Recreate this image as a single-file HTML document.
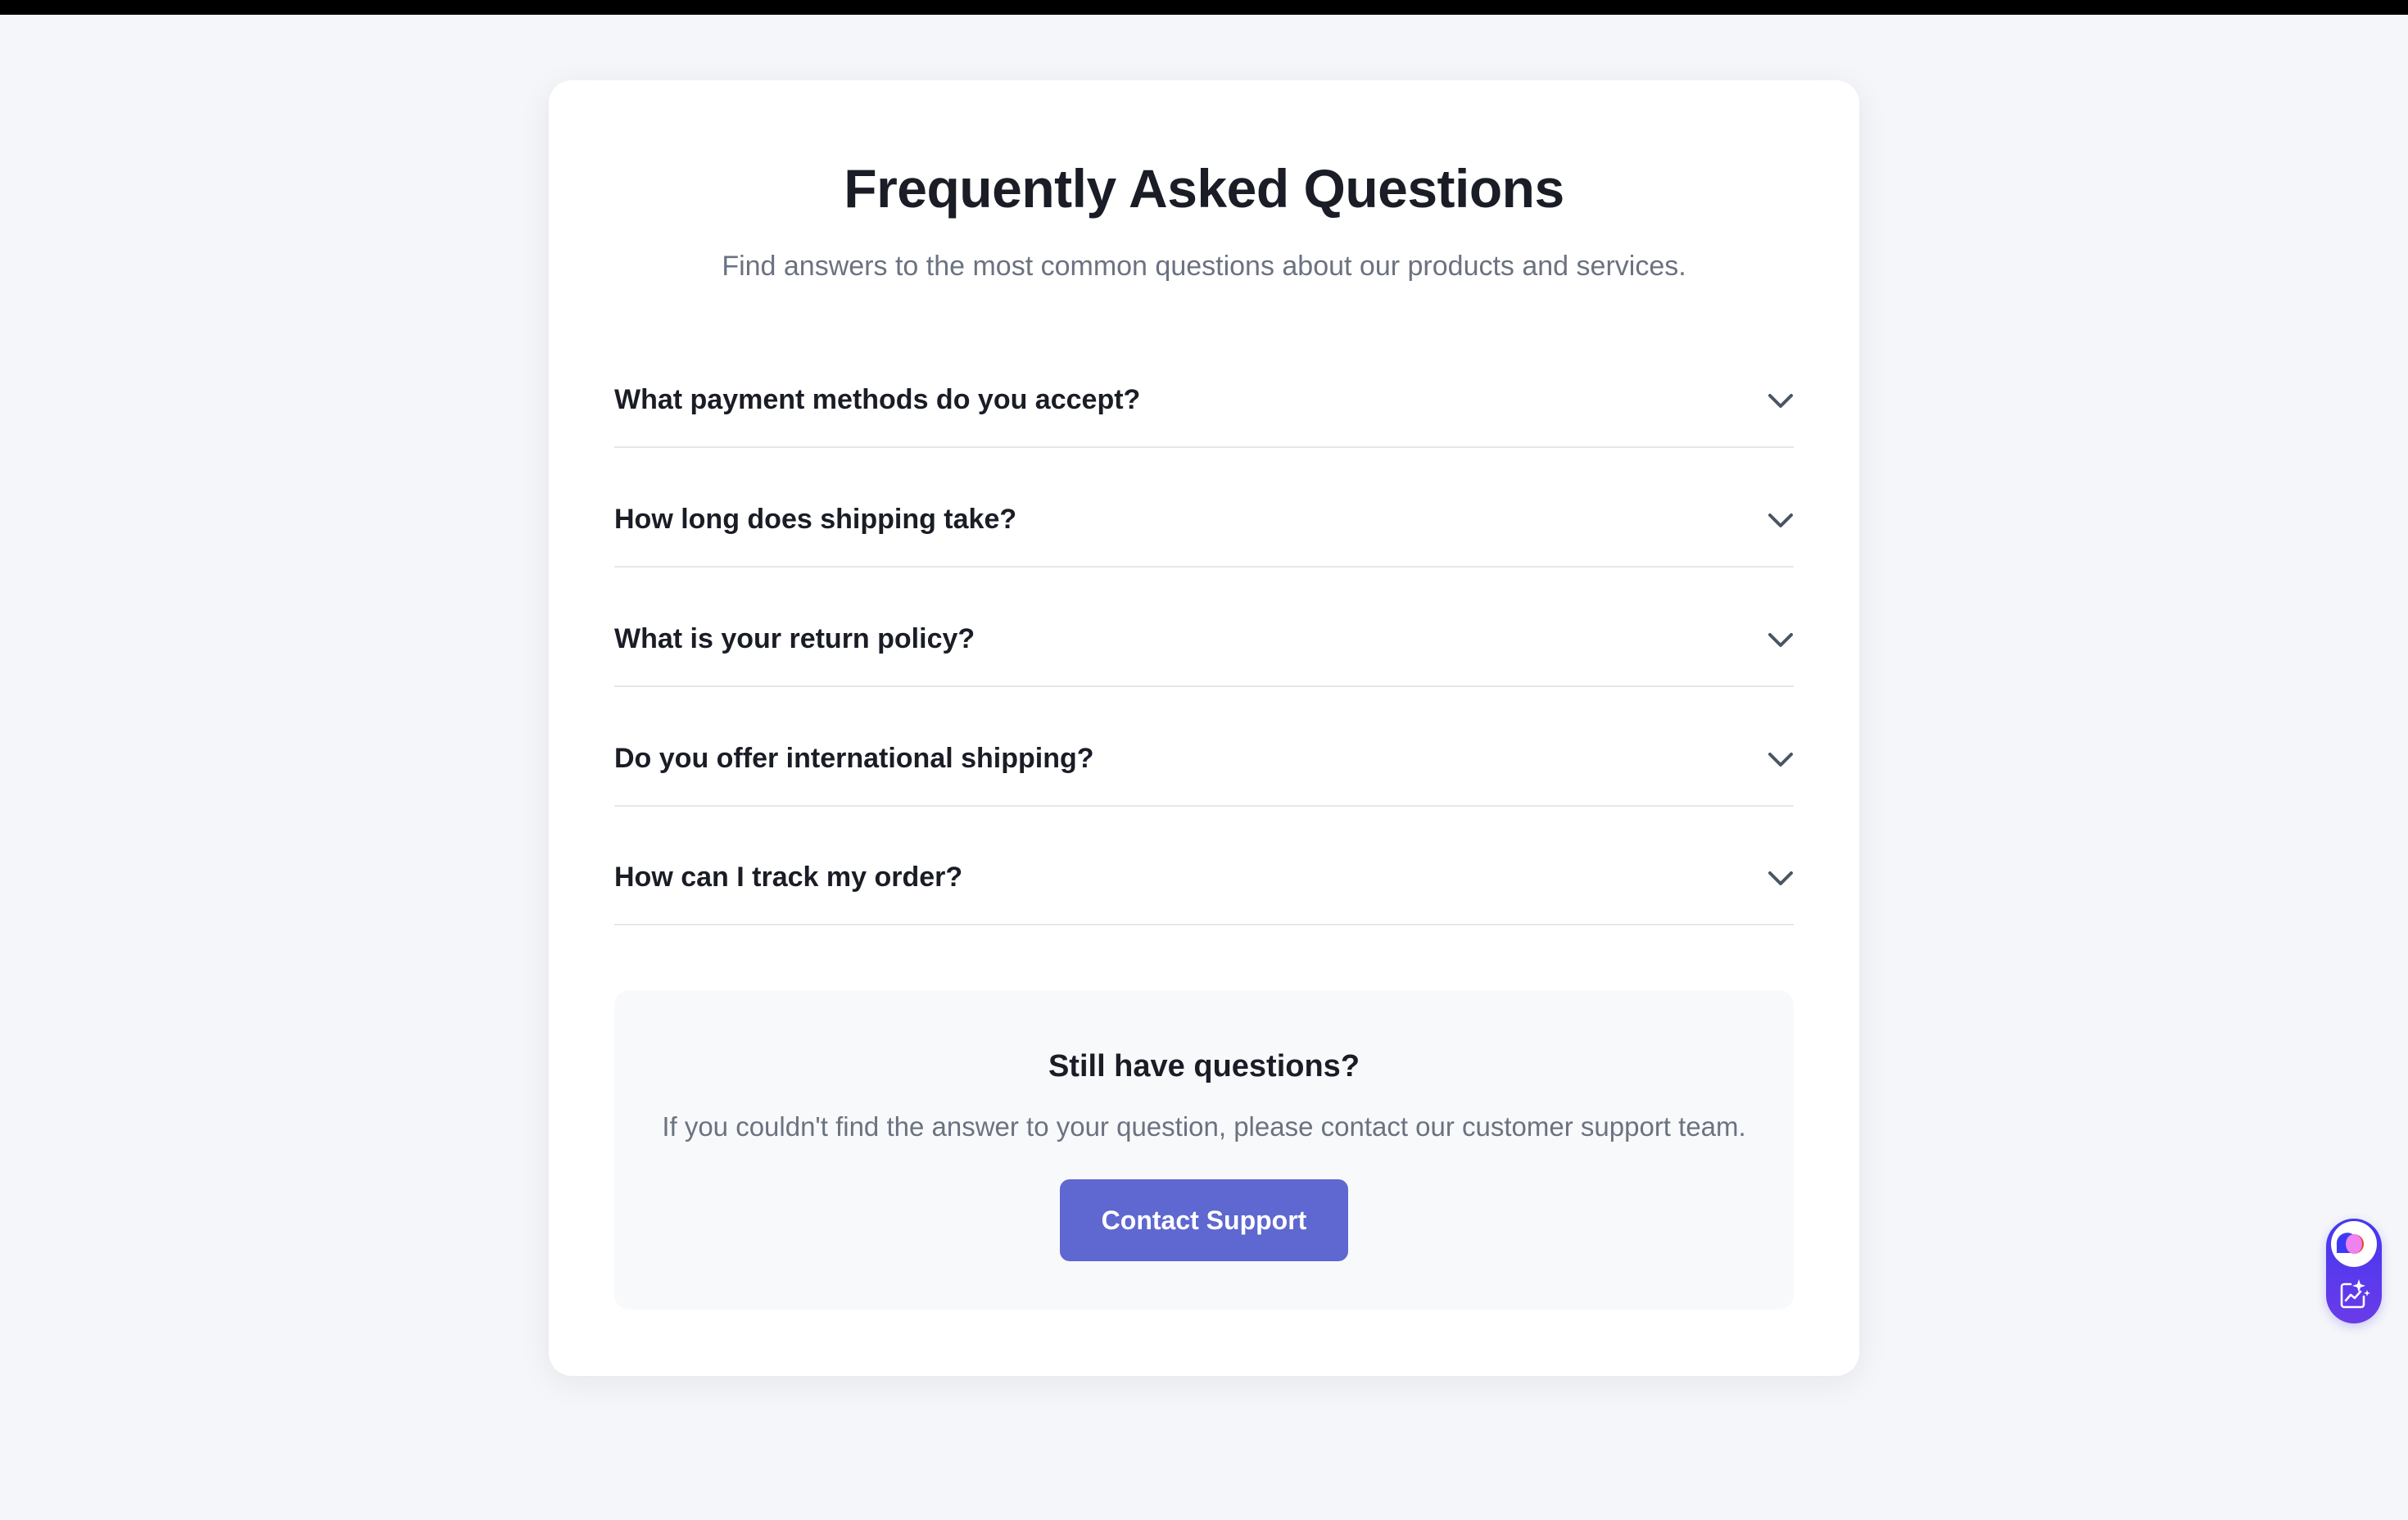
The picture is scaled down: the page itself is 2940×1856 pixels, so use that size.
<!DOCTYPE html>
<html><head><meta charset="utf-8"><style>
*{box-sizing:border-box;margin:0;padding:0}
html,body{width:2940px;height:1856px;overflow:hidden}
body{background:#f5f6f9;font-family:"Liberation Sans",sans-serif;position:relative}
.bar{position:absolute;left:0;top:0;width:2940px;height:18px;background:#000}
.card{position:absolute;left:670px;top:98px;width:1600px;height:1582px;background:#fff;border-radius:28px;box-shadow:0 8px 40px rgba(20,30,60,0.07)}
h1{position:absolute;left:0;right:0;top:185px;text-align:center;font-size:66px;font-weight:700;color:#1a1d26;line-height:90px;letter-spacing:-0.5px}
.sub{position:absolute;left:0;right:0;top:305px;text-align:center;font-size:34px;color:#6b7280;line-height:40px}
.q{position:absolute;left:750px;width:1440px;height:2px;background:#e5e7eb}
.qt{position:absolute;left:750px;font-size:34px;font-weight:700;color:#1a1d26;line-height:40px}
.chev{position:absolute;left:2158px;width:32px;height:20px}
.box{position:absolute;left:750px;top:1209px;width:1440px;height:390px;background:#f8f9fb;border-radius:18px}
.h2{position:absolute;left:750px;width:1440px;top:1280px;text-align:center;font-size:38px;font-weight:700;color:#1a1d26;line-height:44px}
.p{position:absolute;left:750px;width:1440px;top:1358px;text-align:center;font-size:33px;color:#6b7280;line-height:36px}
.btn{position:absolute;left:1294px;top:1440px;width:352px;height:100px;background:#5f67d0;border-radius:12px;color:#fff;font-size:32px;font-weight:700;text-align:center;line-height:100px}
.w{position:absolute;left:2840px;top:1488px;width:68px;height:128px;border-radius:34px;background:linear-gradient(#4338f0,#6b3be8);box-shadow:0 4px 12px rgba(70,60,240,0.25)}
</style></head><body>
<div class="bar"></div>
<div class="card"></div>
<h1>Frequently Asked Questions</h1>
<div class="sub">Find answers to the most common questions about our products and services.</div>

<div class="qt" style="top:468px">What payment methods do you accept?</div>
<div class="qt" style="top:614px">How long does shipping take?</div>
<div class="qt" style="top:760px">What is your return policy?</div>
<div class="qt" style="top:906px">Do you offer international shipping?</div>
<div class="qt" style="top:1051px">How can I track my order?</div>

<svg class="chev" style="top:480px" viewBox="0 0 32 20"><path d="M3 3 L16 16 L29 3" fill="none" stroke="#4b5563" stroke-width="4" stroke-linecap="round" stroke-linejoin="round"/></svg>
<svg class="chev" style="top:626px" viewBox="0 0 32 20"><path d="M3 3 L16 16 L29 3" fill="none" stroke="#4b5563" stroke-width="4" stroke-linecap="round" stroke-linejoin="round"/></svg>
<svg class="chev" style="top:772px" viewBox="0 0 32 20"><path d="M3 3 L16 16 L29 3" fill="none" stroke="#4b5563" stroke-width="4" stroke-linecap="round" stroke-linejoin="round"/></svg>
<svg class="chev" style="top:918px" viewBox="0 0 32 20"><path d="M3 3 L16 16 L29 3" fill="none" stroke="#4b5563" stroke-width="4" stroke-linecap="round" stroke-linejoin="round"/></svg>
<svg class="chev" style="top:1063px" viewBox="0 0 32 20"><path d="M3 3 L16 16 L29 3" fill="none" stroke="#4b5563" stroke-width="4" stroke-linecap="round" stroke-linejoin="round"/></svg>

<div class="q" style="top:545px"></div>
<div class="q" style="top:691px"></div>
<div class="q" style="top:837px"></div>
<div class="q" style="top:983px"></div>
<div class="q" style="top:1128px"></div>

<div class="box"></div>
<div class="h2">Still have questions?</div>
<div class="p">If you couldn't find the answer to your question, please contact our customer support team.</div>
<div class="btn">Contact Support</div>

<div class="w">
<svg width="68" height="128" viewBox="0 0 68 128">
<circle cx="34" cy="31" r="28" fill="#fff"/>
<path d="M13 42 L13 32 A13 13 0 0 1 35 21 L35 42 Z" fill="#3b3bf5"/>
<path d="M34 19 A12 12 0 0 1 34 43 Z" fill="#ef3b2f"/>
<ellipse cx="34" cy="31" rx="10" ry="12" fill="#ee82ee"/>
<path d="M30 80 H22 a3 3 0 0 0 -3 3 V105 a3 3 0 0 0 3 3 H43 a3 3 0 0 0 3 -3 V95" fill="none" stroke="#fff" stroke-width="2.6" stroke-linecap="round"/>
<path d="M24 100 L30 93 L35 97 L42 89" fill="none" stroke="#fff" stroke-width="2.6" stroke-linecap="round" stroke-linejoin="round"/>
<path d="M40 74 L42 80 L48 82 L42 84 L40 90 L38 84 L32 82 L38 80 Z" fill="#fff"/>
<path d="M50 87 L51 90 L54 91 L51 92 L50 95 L49 92 L46 91 L49 90 Z" fill="#fff"/>
</svg>
</div>
</body></html>
